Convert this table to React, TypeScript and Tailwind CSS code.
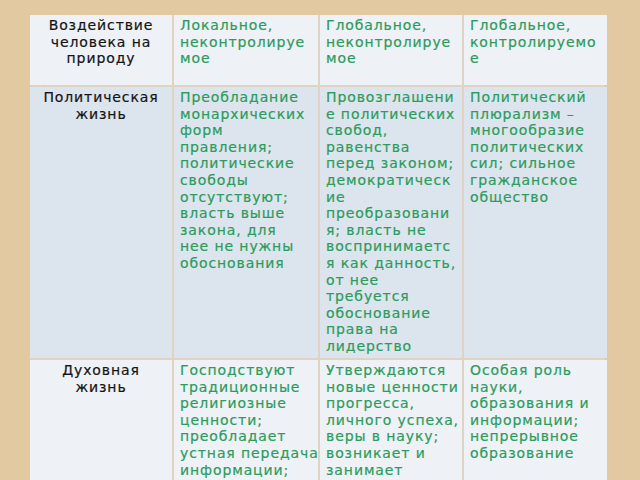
import React from "react";

type Cell = { lines: string[]; head?: boolean };

const rows: { h: string; cells: Cell[]; bg: string }[] = [
  {
    h: "h-[70px]",
    bg: "bg-[#eef1f6]",
    cells: [
      { head: true, lines: ["Воздействие", "человека на", "природу"] },
      { lines: ["Локальное,", "неконтролируе", "мое"] },
      { lines: ["Глобальное,", "неконтролируе", "мое"] },
      { lines: ["Глобальное,", "контролируемо", "е"] },
    ],
  },
  {
    h: "h-[271px]",
    bg: "bg-[#dce5ed]",
    cells: [
      { head: true, lines: ["Политическая", "жизнь"] },
      {
        lines: [
          "Преобладание",
          "монархических",
          "форм",
          "правления;",
          "политические",
          "свободы",
          "отсутствуют;",
          "власть выше",
          "закона, для",
          "нее не нужны",
          "обоснования",
        ],
      },
      {
        lines: [
          "Провозглашени",
          "е политических",
          "свобод,",
          "равенства",
          "перед законом;",
          "демократическ",
          "ие",
          "преобразовани",
          "я; власть не",
          "воспринимаетс",
          "я как данность,",
          "от нее",
          "требуется",
          "обоснование",
          "права на",
          "лидерство",
        ],
      },
      {
        lines: [
          "Политический",
          "плюрализм –",
          "многообразие",
          "политических",
          "сил; сильное",
          "гражданское",
          "общество",
        ],
      },
    ],
  },
  {
    h: "h-[140px]",
    bg: "bg-[#eef2f7]",
    cells: [
      { head: true, lines: ["Духовная", "жизнь"] },
      {
        lines: [
          "Господствуют",
          "традиционные",
          "религиозные",
          "ценности;",
          "преобладает",
          "устная передача",
          "информации;",
          "малая",
        ],
      },
      {
        lines: [
          "Утверждаются",
          "новые ценности",
          "прогресса,",
          "личного успеха,",
          "веры в науку;",
          "возникает и",
          "занимает",
          "лидирующие",
        ],
      },
      {
        lines: [
          "Особая роль",
          "науки,",
          "образования и",
          "информации;",
          "непрерывное",
          "образование",
        ],
      },
    ],
  },
];

export default function App() {
  return (
    <div className="w-[640px] h-[480px] overflow-hidden bg-[#e2c9a1] pt-[15px] pl-[30px] font-['DejaVu_Sans',sans-serif]">
      <div className="w-[575px] grid grid-cols-[142px_144px_142px_143px] gap-[2px] bg-[#dfd3c1]">
        {rows.map((r, ri) =>
          r.cells.map((c, ci) => (
            <div
              key={`${ri}-${ci}`}
              className={`${r.h} ${r.bg} pt-[2px] text-[14px] leading-[16.6px] tracking-[0.9px] whitespace-nowrap overflow-hidden [-webkit-text-stroke:0.2px_currentColor] ${
                c.head
                  ? "text-center text-[#141414] px-0"
                  : "text-left text-[#2c9b5c] pl-[6px]"
              }`}
            >
              {c.lines.map((l, li) => (
                <div key={li}>{l}</div>
              ))}
            </div>
          ))
        )}
      </div>
    </div>
  );
}
